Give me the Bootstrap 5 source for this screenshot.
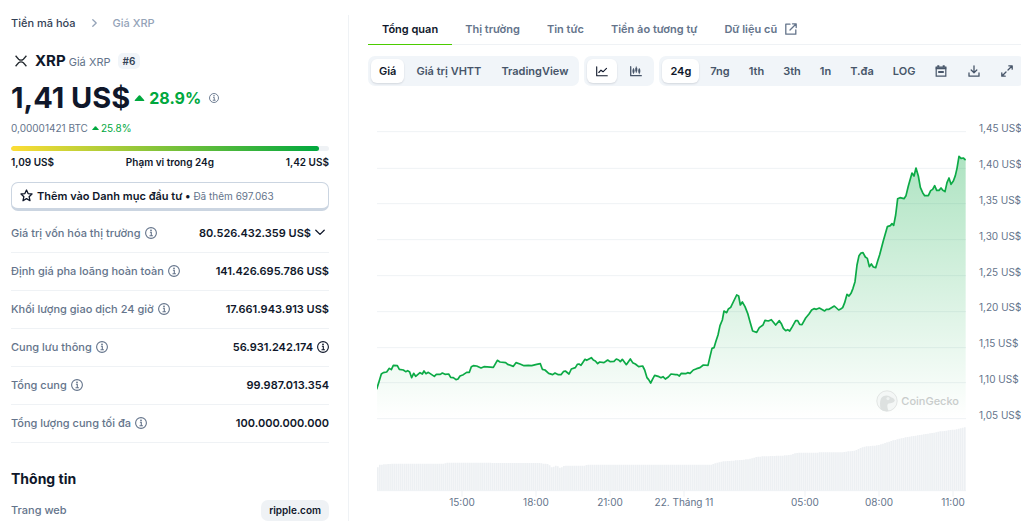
<!DOCTYPE html>
<html lang="vi">
<head>
<meta charset="utf-8">
<meta name="viewport" content="width=device-width, initial-scale=1">
<title>Giá XRP</title>
<link href="https://cdn.jsdelivr.net/npm/bootstrap@5.3.0/dist/css/bootstrap.min.css" rel="stylesheet">
<style>
  body { font-family: Inter, "Liberation Sans", sans-serif; font-size: 11px; line-height: 16px; color: #0f172a; background: #fff; overflow-x: hidden; }
  a { color: inherit; text-decoration: none; }
  svg { flex: none; display: block; }
  .ic { fill: none; stroke: currentColor; stroke-width: 1.3; stroke-linecap: round; stroke-linejoin: round; }
  .slate { color: #64748b; }
  .up { color: #00a83e; }
  .page { padding: 15px 0 0 11px; }
  .side { width: 338px; flex: none; padding-right: 19px; border-right: 1px solid #eff2f5; }
  .main-area { padding-left: 19px; min-width: 0; overflow: hidden; }
  .crumbs { font-weight: 500; gap: 16px; color: #334155; }
  .crumbs .now { color: #94a3b8; }
  .coin { margin-top: 22px; height: 16px; }
  .coin h1 { font-size: 11px; line-height: 16px; font-weight: 400; color: #64748b; }
  .coin h1 b { font-size: 15px; font-weight: 700; color: #0f172a; }
  .rank { background: #f1f5f9; border-radius: 5px; padding: 0 5px; font-size: 10px; font-weight: 600; color: #334155; margin-left: 7px; }
  .price { font-size: 29px; line-height: 36px; font-weight: 700; margin-top: 11px; }
  .change { font-size: 16px; line-height: 24px; font-weight: 700; }
  .btc { font-size: 10px; line-height: 14px; margin-top: 5px; }
  .btc .up { gap: 2px; }
  .range { height: 5px; margin-top: 11px; border-radius: 3px; background: #eff2f5; }
  .range .progress-bar { background: linear-gradient(90deg, #fddd35, #00a83e); border-radius: 3px; }
  .range-text { font-size: 10px; font-weight: 600; line-height: 14px; margin-top: 4px; }
  .watch { margin-top: 13px; height: 29px; width: 100%; border: 1px solid #cbd5e1; border-bottom-width: 3px; border-radius: 7px; background: #fff; color: #0f172a; font-size: 11px; font-weight: 600; padding: 0 8px; gap: 4px; }
  .watch small { font-size: 10px; font-weight: 400; color: #64748b; }
  .stats { margin: 3px 0 0; font-size: 11px; white-space: nowrap; }
  .stats th, .stats td { height: 38px; padding: 0; border-bottom: 1px solid #eff2f5; vertical-align: middle; }
  .stats th { font-weight: 500; color: #64748b; }
  .stats td { font-weight: 600; }
  .info-title { font-size: 14px; line-height: 20px; font-weight: 700; margin: 26px 0 0; }
  .info-row { margin-top: 11px; font-weight: 500; }
  .site { background: #eff2f5; color: #0f172a; border-radius: 7px; font-size: 10px; font-weight: 600; line-height: 21px; padding: 0 8px; }
  .tabs { border-bottom: 1px solid #eff2f5; font-weight: 600; }
  .tabs .nav-link { color: #64748b; padding: 6px 14px 7px; line-height: 16px; border-bottom: 1px solid transparent; margin-bottom: -1px; white-space: nowrap; margin-right: -1px; }
  .tabs .nav-link.active { color: #0f172a; border-color: #4bcc00; }
  .tools { margin-top: 11px; gap: 5px; }
  .seg { background: #f1f5f9; border-radius: 7px; padding: 3px; gap: 4px; height: 30px; flex: none; }
  .seg.spans { gap: 3px; }
  .seg button { border: 0; background: transparent; border-radius: 6px; color: #475569; font-size: 11px; font-weight: 600; line-height: 16px; padding: 0 8px; height: 24px; white-space: nowrap; }
  .seg button.on { background: #fff; color: #0f172a; box-shadow: 0 1px 2px #0f172a22; }
  .seg button:has(svg) { padding: 0 9px; }
  .chart { margin: 34px 0 0 9px; color: #64748b; font-size: 10px; line-height: 14px; }
  .plot { position: relative; min-width: 0; }
  .plot > svg { width: 100%; height: 380px; }
  .scale { width: 55px; padding-left: 13px; height: 301px; margin-top: 1px; flex: none; white-space: nowrap; }
  .hours { display: grid; grid-template-columns: 48fr 74fr 74fr 74fr 74fr 47fr 74fr 74fr 74fr 31fr; text-align: center; white-space: nowrap; margin-top: -5px; }
  .hours .first { grid-column: 2; }
  .hours .skip { grid-column: 7; }
  .brandmark { position: absolute; right: 7px; top: 270px; gap: 3px; font-size: 11px; font-weight: 500; color: #c8cccb; line-height: 22px; }
</style>
<script src="https://cdn.jsdelivr.net/npm/bootstrap@5.3.0/dist/js/bootstrap.bundle.min.js" defer></script>
</head>
<body>
<svg width="0" height="0" class="position-absolute" aria-hidden="true">
  <symbol id="info" viewBox="0 0 12 12"><circle cx="6" cy="6" r="5.4" fill="none" stroke="currentColor" stroke-width="1.100"/><path d="M4.900 5.300H6.300V8.600M4.500 8.700H7.900" fill="none" stroke="currentColor" stroke-width="1.100"/><circle cx="6" cy="3.300" r=".9" fill="currentColor"/></symbol>
  <symbol id="tri" viewBox="0 0 10 6"><path d="M.6 6Q-.3 6 .4 5L4.300.6Q5 0 5.700.6L9.600 5Q10.300 6 9.400 6Z" fill="currentColor"/></symbol>
</svg>
<div class="page d-flex">
  <aside class="side">
    <nav class="crumbs d-flex align-items-center" aria-label="breadcrumb">
      <a href="#">Tiền mã hóa</a>
      <svg class="ic now" width="5" height="8" viewBox="0 0 5 8"><path d="M.8.8 4.200 4 .8 7.200"/></svg>
      <span class="now">Giá XRP</span>
    </nav>
    <div class="coin d-flex align-items-center">
      <svg class="ms-1 me-2" width="12" height="12" viewBox="0 0 12 12" fill="none" stroke="#23292f" stroke-width="1.3"><path d="M.6.8 3.600 4.200Q6 6.200 8.400 4.200L11.400.8M.6 11.200 3.600 7.800Q6 5.800 8.400 7.800L11.400 11.200"/></svg>
      <h1 class="m-0"><b>XRP</b> Giá XRP</h1>
      <span class="rank">#6</span>
    </div>
    <div class="d-flex align-items-center price">
      <span>1,41 US$</span>
      <span class="change up d-flex align-items-center gap-1 ms-1"><svg width="11" height="6"><use href="#tri"/></svg>28.9%</span>
      <svg class="slate ms-2" width="10" height="10"><use href="#info"/></svg>
    </div>
    <div class="btc slate d-flex align-items-center">0,00001421 BTC <span class="up d-flex align-items-center ms-1"><svg width="7" height="4"><use href="#tri"/></svg>25.8%</span></div>
    <div class="progress range" role="progressbar" aria-label="Phạm vi trong 24g" aria-valuenow="97" aria-valuemin="0" aria-valuemax="100"><div class="progress-bar" style="width:97%"></div></div>
    <div class="range-text d-flex justify-content-between"><span>1,09 US$</span><span>Phạm vi trong 24g</span><span>1,42 US$</span></div>
    <button type="button" class="watch d-flex align-items-center">
      <svg class="ic" width="13" height="13" viewBox="0 0 13 13"><path d="M6.500 1 8.100 4.600 12 5 9.100 7.700 10 11.700 6.500 9.600 3 11.700 3.900 7.700 1 5 4.900 4.600Z"/></svg>
      <span>Thêm vào Danh mục đầu tư • <small>Đã thêm 697.063</small></span>
    </button>
    <table class="stats w-100">
      <tbody>
        <tr><th scope="row"><span class="d-flex align-items-center gap-1">Giá trị vốn hóa thị trường <svg width="12" height="12"><use href="#info"/></svg></span></th><td><span class="d-flex align-items-center justify-content-end gap-1">80.526.432.359 US$ <svg class="ic me-1" width="10" height="7" viewBox="0 0 10 7"><path d="M.8 1.200 5 5.400 9.200 1.200"/></svg></span></td></tr>
        <tr><th scope="row"><span class="d-flex align-items-center gap-1">Định giá pha loãng hoàn toàn <svg width="12" height="12"><use href="#info"/></svg></span></th><td class="text-end">141.426.695.786 US$</td></tr>
        <tr><th scope="row"><span class="d-flex align-items-center gap-1">Khối lượng giao dịch 24 giờ <svg width="12" height="12"><use href="#info"/></svg></span></th><td class="text-end">17.661.943.913 US$</td></tr>
        <tr><th scope="row"><span class="d-flex align-items-center gap-1">Cung lưu thông <svg width="12" height="12"><use href="#info"/></svg></span></th><td><span class="d-flex align-items-center justify-content-end gap-1">56.931.242.174 <svg width="12" height="12"><use href="#info"/></svg></span></td></tr>
        <tr><th scope="row"><span class="d-flex align-items-center gap-1">Tổng cung <svg width="12" height="12"><use href="#info"/></svg></span></th><td class="text-end">99.987.013.354</td></tr>
        <tr><th scope="row"><span class="d-flex align-items-center gap-1">Tổng lượng cung tối đa <svg width="12" height="12"><use href="#info"/></svg></span></th><td class="text-end">100.000.000.000</td></tr>
      </tbody>
    </table>
    <h2 class="info-title">Thông tin</h2>
    <div class="info-row d-flex justify-content-between align-items-center"><span class="slate">Trang web</span><a class="site" href="#">ripple.com</a></div>
  </aside>

  <main class="main-area flex-grow-1">
    <nav class="tabs nav flex-nowrap">
      <a class="nav-link active" href="#">Tổng quan</a>
      <a class="nav-link" href="#">Thị trường</a>
      <a class="nav-link" href="#">Tin tức</a>
      <a class="nav-link" href="#">Tiền ảo tương tự</a>
      <a class="nav-link d-flex align-items-center gap-1" href="#">Dữ liệu cũ <svg class="ic ms-1" width="12" height="12" viewBox="0 0 12 12"><path d="M5 1.200H.8V11.200H10.800V7M7.500.8H11.200V4.500M11 1 5 7"/></svg></a>
    </nav>
    <div class="tools d-flex">
      <div class="seg d-flex">
        <button type="button" class="on">Giá</button><button type="button">Giá trị VHTT</button><button type="button">TradingView</button>
      </div>
      <div class="seg d-flex">
        <button type="button" class="on" aria-label="Biểu đồ đường"><svg class="ic" width="12" height="11" viewBox="0 0 12 11"><path d="M.7.7V9.700H11.300M2.800 6.500 5 4.200 7 5.800 10.500 2.300" stroke-width="1.1"/></svg></button>
        <button type="button" aria-label="Biểu đồ nến"><svg class="ic" width="12" height="11" viewBox="0 0 12 11"><path d="M.7.7V9.700H11.300"/><path d="M3.500 2.500V7.500M6.300.8V6.500M9.300 2.500V7.800" stroke-width=".8"/><path d="M3.500 4V6M6.300 2.500V4.800M9.300 4V6" stroke-width="2"/></svg></button>
      </div>
      <div class="seg spans d-flex">
        <button type="button" class="on">24g</button><button type="button">7ng</button><button type="button">1th</button><button type="button">3th</button><button type="button">1n</button><button type="button">T.đa</button><button type="button">LOG</button>
        <button type="button" aria-label="Lịch"><svg width="12" height="12" viewBox="0 0 12 12" fill="none" stroke="currentColor"><path d="M1.200 2H10.800V11.200H1.200Z" stroke-width="1.200"/><path d="M.7 3.200H11.300M3.300.3V2M8.700.3V2" stroke-width="2"/><path d="M3.200 7H8.800" stroke-width="2"/></svg></button>
        <button type="button" aria-label="Tải xuống"><svg class="ic" width="12" height="12" viewBox="0 0 12 12"><path d="M6 .8V7.500M3.200 5 6 7.800 8.800 5M1 8V11.200H11V8"/></svg></button>
        <button type="button" aria-label="Toàn màn hình"><svg class="ic" width="12" height="12" viewBox="0 0 12 12"><path d="M7.800.8H11.200V4.200M11 1 7 5M4.200 11.200H.8V7.800M1 11 5 7"/></svg></button>
      </div>
    </div>
    <div class="chart">
      <div class="d-flex">
        <div class="plot flex-grow-1">
          <svg viewBox="0 0 1767 1140" preserveAspectRatio="none" role="img" aria-label="Biểu đồ giá XRP trong 24 giờ">
            <defs><linearGradient id="fade" gradientUnits="userSpaceOnUse" x1="0" y1="105" x2="0" y2="895"><stop stop-color="#00a83e" stop-opacity=".32"/><stop offset="1" stop-color="#00a83e" stop-opacity="0"/></linearGradient></defs>
            <path d="M0 35H1767M0 145H1767M0 251H1767M0 359H1767M0 467H1767M0 575H1767M0 683H1767M0 788H1767M0 896H1767" stroke="#eff2f5" stroke-width="1" vector-effect="non-scaling-stroke"/>
            <path id="bars" fill="#edf0f3"/>
            <path d="M0 1112H1767M255 1112V1130M477 1112V1130M699 1112V1130M921 1112V1130M1284 1112V1130M1506 1112V1130M1728 1112V1130" stroke="#eff2f5" vector-effect="non-scaling-stroke"/>
            <path id="area" fill="url(#fade)"/>
            <path id="line" fill="none" stroke="#0caa46" stroke-width="1.700" stroke-linejoin="round" vector-effect="non-scaling-stroke"/>
          </svg>
          <div class="brandmark d-flex align-items-center">
            <svg width="22" height="22" viewBox="0 0 22 22"><circle cx="11" cy="11" r="10.200" fill="#f4f7f6" stroke="#e2e5e4"/><path d="M4.500 19C4 15 3.500 12 5 8.500 6.500 5.500 11 4.500 14 6.500 16 7.800 19 8.600 18.800 10.800 18 13 15 13.300 12.500 13.500 10.500 14.500 11.500 18 12.500 21 9 21.500 6.500 20.700 4.500 19Z" fill="#dde1e0"/><circle cx="12" cy="8.600" r="1.600" fill="#eff2f1"/></svg>
            <span>CoinGecko</span>
          </div>
        </div>
        <div class="scale d-flex flex-column justify-content-between"><span>1,45 US$</span><span>1,40 US$</span><span>1,35 US$</span><span>1,30 US$</span><span>1,25 US$</span><span>1,20 US$</span><span>1,15 US$</span><span>1,10 US$</span><span>1,05 US$</span></div>
      </div>
      <div class="hours"><span class="first">15:00</span><span>18:00</span><span>21:00</span><span>22. Tháng 11</span><span class="skip">05:00</span><span>08:00</span><span>11:00</span></div>
    </div>
  </main>
</div>
<script>
  // Price series in four runs; each run has its own origin in plot units.
  const runs = [
    [-21, 660, "20,148 27,125 34,102 40,98 50,96 58,85 64,89 70,76 82,77 88,88 100,90 107,95 113,92 119,96 125,113 131,100 137,109 150,98 157,102 162,93 168,101 175,97 193,109 199,103 211,103 217,99 225,103 236,102 242,112 250,113 258,119 264,117 270,108 280,104 290,97 298,97 304,80 310,77 320,78 333,84 342,80 370,82 382,61 390,66 407,68 413,73 430,79 438,68 450,72 462,77 475,76 485,77 500,73 511,71 517,88 525,90 536,100 548,104 555,99 565,104 573,104 580,95 586,93 597,102 604,87 616,83 622,73 627,72 633,76 645,58 650,61"],
    [549, 660, "94,53 100,60 106,63 113,71 119,66 132,68 143,60 150,65 162,64 169,57 176,60 181,65 187,58 193,66 199,74 211,57 218,68 226,72 236,80 248,78 254,90 261,113 266,119 272,129 279,115 284,106 297,110 303,113 309,110 316,117 325,111 333,102 347,104 352,104 358,108 364,100 377,101 383,98 390,100 400,90 410,86 420,83 430,75 444,76"],
    [939, 480, "60,230 66,205 72,203 78,183 84,165 90,137 97,120 102,93 110,98 115,87 122,82 140,45 146,48 151,75 157,66 165,80 173,100 180,125 188,153 200,157 208,143 219,135 225,121 235,123 244,119 257,135 268,122 274,131 280,145 287,152 293,149 299,153 307,140 317,122 323,122 329,133 336,134 347,114 357,102 365,90 372,86 379,88 388,84 404,93 409,88 417,88 433,78 446,90"],
    [1389, 0, "2,567 8,563 14,548 21,523 27,528 33,520 39,505 45,485 51,435 57,407 63,399 69,398 76,411 82,415 88,440 94,432 100,441 107,443 113,423 119,404 130,362 142,320 151,317 156,311 161,316 167,285 173,236 180,233 192,236 198,227 205,198 216,159 222,168 228,144 235,168 241,202 248,218 254,227 265,227 272,212 278,208 284,197 290,211 297,211 303,204 309,211 315,215 321,188 327,174 333,193 340,183 346,167 351,145 357,109 363,115 370,114 377,120"]
  ];
  const pts = runs.flatMap(([ox, oy, s]) => s.split(" ").map(p => { const [x, y] = p.split(",").map(Number); return [x + ox, y + oy]; }));
  const d = "M" + pts.map(p => p.join(" ")).join("L");
  document.getElementById("line").setAttribute("d", d);
  document.getElementById("area").setAttribute("d", d + "V896H0Z");

  // Volume tops at key positions, interpolated to one bar per five minutes.
  const vol = [[0,1042],[6,1034],[50,1031],[200,1031],[205,1028],[480,1029],[512,1032],[522,1043],[536,1036],[548,1044],[560,1037],[620,1037],[630,1034],[1000,1034],[1030,1025],[1110,1018],[1140,1010],[1230,1006],[1260,998],[1389,997],[1430,992],[1458,980],[1500,976],[1540,963],[1570,955],[1605,948],[1660,939],[1690,934],[1735,928],[1767,920]];
  let b = "";
  for (let i = 0, k = 0; i < 288; i++) {
    const x = i * 1767 / 288;
    while (x > vol[k + 1][0]) k++;
    const [x0, y0] = vol[k], [x1, y1] = vol[k + 1];
    b += `M${x.toFixed(1)} 1112V${Math.round(y0 + (y1 - y0) * (x - x0) / (x1 - x0))}h5V1112Z`;
  }
  document.getElementById("bars").setAttribute("d", b);
</script>
</body>
</html>
